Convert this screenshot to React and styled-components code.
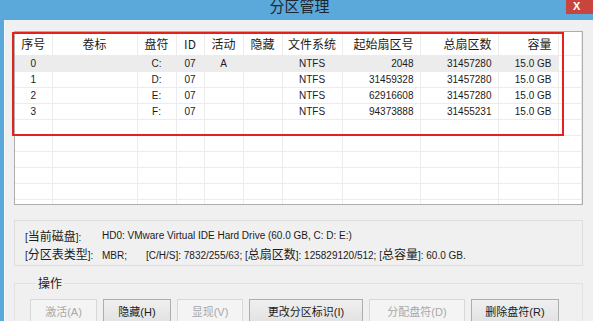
import React from 'react';
import styled, { createGlobalStyle } from 'styled-components';

const GlobalStyle = createGlobalStyle`
  html, body {
    margin: 0;
    padding: 0;
    overflow: hidden;
    background: #f0f0f0;
  }
  body {
    font-family: "Liberation Sans", "Noto Sans CJK SC", sans-serif;
    color: #1b1b1b;
  }
`;

const columns = [
  { key: 'idx', title: '序号', width: 37, align: 'center' },
  { key: 'label', title: '卷标', width: 85, align: 'center' },
  { key: 'drive', title: '盘符', width: 39, align: 'center' },
  { key: 'id', title: 'ID', width: 28, align: 'center' },
  { key: 'active', title: '活动', width: 39, align: 'center' },
  { key: 'hidden', title: '隐藏', width: 39, align: 'center' },
  { key: 'fs', title: '文件系统', width: 60, align: 'center' },
  { key: 'start', title: '起始扇区号', width: 78, align: 'right' },
  { key: 'total', title: '总扇区数', width: 78, align: 'right' },
  { key: 'size', title: '容量', width: 60, align: 'right' },
];

const partitions = [
  { idx: '0', label: '', drive: 'C:', id: '07', active: 'A', hidden: '', fs: 'NTFS', start: '2048', total: '31457280', size: '15.0 GB' },
  { idx: '1', label: '', drive: 'D:', id: '07', active: '', hidden: '', fs: 'NTFS', start: '31459328', total: '31457280', size: '15.0 GB' },
  { idx: '2', label: '', drive: 'E:', id: '07', active: '', hidden: '', fs: 'NTFS', start: '62916608', total: '31457280', size: '15.0 GB' },
  { idx: '3', label: '', drive: 'F:', id: '07', active: '', hidden: '', fs: 'NTFS', start: '94373888', total: '31455231', size: '15.0 GB' },
];

const actions = [
  { label: '激活(A)', width: 67, disabled: true },
  { label: '隐藏(H)', width: 68 },
  { label: '显现(V)', width: 66, disabled: true },
  { label: '更改分区标识(I)', width: 114 },
  { label: '分配盘符(D)', width: 96, disabled: true },
  { label: '删除盘符(R)', width: 88 },
];

const Window = styled.div`
  position: relative;
  width: 593px;
  height: 321px;
  display: flex;
  flex-direction: column;
  overflow: hidden;
  background: #5ba8db;
`;

const TitleBar = styled.div`
  height: 20px;
  flex-shrink: 0;
  display: grid;
  grid-template-columns: 1fr auto 1fr;
  align-items: start;
`;

const Title = styled.div`
  grid-column: 2;
  margin-top: -3px;
  padding-left: 6px;
  font-family: "Noto Sans CJK SC", sans-serif;
  font-size: 15px;
  line-height: 18px;
  color: #1d2630;
`;

const CloseButton = styled.div`
  grid-column: 3;
  justify-self: end;
  width: 27px;
  height: 14px;
  background: #c8453e;
  color: #fff;
  font-size: 11px;
  font-weight: bold;
  line-height: 12px;
  padding-left: 7px;
  box-sizing: border-box;
`;

const Body = styled.div`
  flex: 1;
  margin-left: 4px;
  background: #f0f0f0;
  border-left: 1px solid #f8f8f8;
  padding: 11px 10px 0 9px;
  display: flex;
  flex-direction: column;
`;

const ListView = styled.div`
  height: 174px;
  flex-shrink: 0;
  box-sizing: border-box;
  border: 1px solid #adadad;
  background: #fff;
  overflow: hidden;
`;

const Grid = styled.table`
  table-layout: fixed;
  border-collapse: collapse;
  width: 567px;
`;

const HeadCell = styled.th`
  height: 23px;
  padding: 0 ${(p) => (p.$align === 'right' ? '6px' : '0')} 0 0;
  text-align: ${(p) => p.$align};
  font-family: "Noto Sans CJK SC", sans-serif;
  font-size: 12px;
  font-weight: normal;
  color: #1b1b1b;
  border-right: 1px solid #ececec;
  white-space: nowrap;
`;

const Row = styled.tr`
  height: 16px;
  background: ${(p) => (p.$selected ? '#ececec' : 'transparent')};
`;

const Cell = styled.td`
  padding: 0 ${(p) => (p.$align === 'right' ? '6px' : '0')} 0 0;
  text-align: ${(p) => p.$align};
  font-size: 10px;
  line-height: 15px;
  border-right: 1px solid #ececec;
  border-top: 1px solid #ececec;
  white-space: nowrap;
  background: ${(p) => (p.$filler ? '#fff' : 'inherit')};
`;

const Annotation = styled.div`
  position: absolute;
  left: 12px;
  top: 32px;
  width: 552px;
  height: 104px;
  box-sizing: border-box;
  border: 2px solid #e3221f;
  pointer-events: none;
`;

const InfoBox = styled.div`
  margin-top: 15px;
  height: 46px;
  box-sizing: border-box;
  border: 1px solid #dedede;
  padding: 8px 10px 0;
  display: grid;
  grid-template-columns: 77px 1fr;
  font-size: 10px;
  line-height: 14px;
`;

const Han = styled.span`
  font-family: "Noto Sans CJK SC", sans-serif;
  font-size: 12px;
`;

const Spaced = styled.span`
  display: inline-block;
  width: 44px;
`;

const Group = styled.fieldset`
  margin: 10px 0 0;
  padding: 0 0 0 15px;
  border: 1px solid #e2e2e2;
  border-bottom: none;
  min-width: 0;
`;

const Legend = styled.legend`
  margin-left: 6px;
  padding: 0 2px;
  font-family: "Noto Sans CJK SC", sans-serif;
  font-size: 12px;
  line-height: 14px;
`;

const ButtonRow = styled.div`
  margin-top: 9px;
  display: flex;
  gap: 6px;
`;

const ActionButton = styled.button`
  width: ${(p) => p.$width}px;
  height: 23px;
  padding: 0;
  box-sizing: border-box;
  font-family: "Liberation Sans", "Noto Sans CJK SC", sans-serif;
  font-size: 11px;
  color: ${(p) => (p.disabled ? '#a8a8a8' : '#1b1b1b')};
  background: ${(p) => (p.disabled ? '#f4f4f4' : 'linear-gradient(#efefef, #e3e3e3)')};
  border: 1px solid ${(p) => (p.disabled ? '#d8d8d8' : '#adadad')};
  border-radius: 0;
`;

export default function App() {
  const emptyRows = Array.from({ length: 7 });

  return (
    <>
      <GlobalStyle />
      <Window>
        <TitleBar>
          <Title>分区管理</Title>
          <CloseButton>X</CloseButton>
        </TitleBar>
        <Body>
          <ListView>
            <Grid>
              <colgroup>
                {columns.map((c) => (
                  <col key={c.key} style={{ width: c.width }} />
                ))}
                <col />
              </colgroup>
              <thead>
                <tr>
                  {columns.map((c) => (
                    <HeadCell key={c.key} $align={c.align}>{c.title}</HeadCell>
                  ))}
                  <HeadCell $align="left" />
                </tr>
              </thead>
              <tbody>
                {partitions.map((p, i) => (
                  <Row key={p.idx} $selected={i === 0}>
                    {columns.map((c) => (
                      <Cell key={c.key} $align={c.align}>{p[c.key]}</Cell>
                    ))}
                    <Cell $filler $align="left" />
                  </Row>
                ))}
                {emptyRows.map((_, i) => (
                  <Row key={`e${i}`}>
                    {columns.map((c) => (
                      <Cell key={c.key} $align={c.align} />
                    ))}
                    <Cell $filler $align="left" />
                  </Row>
                ))}
              </tbody>
            </Grid>
          </ListView>

          <InfoBox>
            <span>[<Han>当前磁盘</Han>]:</span>
            <span>HD0: VMware Virtual IDE Hard Drive (60.0 GB, C: D: E:)</span>
            <span>[<Han>分区表类型</Han>]:</span>
            <span>
              <Spaced>MBR;</Spaced>[C/H/S]: 7832/255/63; [<Han>总扇区数</Han>]: 125829120/512; [<Han>总容量</Han>]: 60.0 GB.
            </span>
          </InfoBox>

          <Group>
            <Legend>操作</Legend>
            <ButtonRow>
              {actions.map((a) => (
                <ActionButton key={a.label} $width={a.width} disabled={a.disabled}>
                  {a.label}
                </ActionButton>
              ))}
            </ButtonRow>
          </Group>
        </Body>
        <Annotation />
      </Window>
    </>
  );
}
